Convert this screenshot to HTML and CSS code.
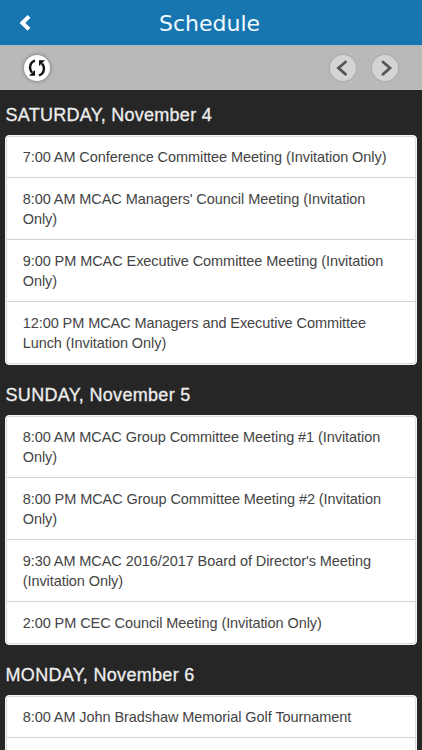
FILE: index.html
```html
<!DOCTYPE html>
<html lang="en">
<head>
    <meta charset="UTF-8">
    <meta name="viewport" content="width=device-width, initial-scale=1.0">
    <title>Schedule</title>
    <link rel="stylesheet" href="styles.css">
</head>
<body>
    <header class="header">
        <a class="back" href="#" aria-label="Back">
            <svg width="12" height="18" viewBox="0 0 12 18"><path d="M10 2.300 3.400 9l6.600 6.300" fill="none" stroke="#fff" stroke-width="4"/></svg>
        </a>
        <h1>Schedule</h1>
    </header>
    <div class="toolbar">
        <button class="round refresh" aria-label="Refresh">
            <svg width="20" height="20" viewBox="0 0 20 20">
                <path d="M8 2.500C2.500 4.500 1.700 10.500 5 14.500M12 17.500C17.500 15.500 18.300 9.500 15 5.500" fill="none" stroke="#111" stroke-width="2.300"/>
                <path d="M2 17.800h6V12zM18 2.200h-6V8z" fill="#111"/>
            </svg>
        </button>
        <div class="pager">
            <button class="round" aria-label="Previous">
                <svg width="26" height="26" viewBox="0 0 26 26"><path d="M15.500 7 8.500 13l7 6.300" fill="none" stroke="#555" stroke-width="2.800" stroke-linecap="round"/></svg>
            </button>
            <button class="round" aria-label="Next">
                <svg width="26" height="26" viewBox="0 0 26 26"><path d="M11 7l7 6-7 6.300" fill="none" stroke="#555" stroke-width="2.800" stroke-linecap="round"/></svg>
            </button>
        </div>
    </div>

    <main class="schedule">
        <h2>SATURDAY, November 4</h2>
        <ul class="events">
            <li>7:00 AM Conference Committee Meeting (Invitation Only)</li>
            <li>8:00 AM MCAC Managers' Council Meeting (Invitation Only)</li>
            <li>9:00 PM MCAC Executive Committee Meeting (Invitation Only)</li>
            <li>12:00 PM MCAC Managers and Executive Committee Lunch (Invitation Only)</li>
        </ul>
        <h2>SUNDAY, November 5</h2>
        <ul class="events">
            <li>8:00 AM MCAC Group Committee Meeting #1 (Invitation Only)</li>
            <li>8:00 PM MCAC Group Committee Meeting #2 (Invitation Only)</li>
            <li>9:30 AM MCAC 2016/2017 Board of Director's Meeting (Invitation Only)</li>
            <li>2:00 PM CEC Council Meeting (Invitation Only)</li>
        </ul>
        <h2>MONDAY, November 6</h2>
        <ul class="events">
            <li>8:00 AM John Bradshaw Memorial Golf Tournament</li>
            <li></li>
        </ul>
    </main>
</body>
</html>
```
FILE: styles.css
```css
* {
    box-sizing: border-box;
}
body {
    display: flex;
    flex-direction: column;
    margin: 0;
    height: 100vh;
    overflow: hidden;
    background-color: #262626;
    font-family: "Liberation Sans", Arial, sans-serif;
}
.header {
    display: grid;
    flex: none;
    grid-template-columns: 50px 1fr 54px;
    align-items: center;
    height: 45px;
    background-color: #1775b0;
}
.back {
    display: flex;
    padding: 0 0 0 19px;
}
.header h1 {
    margin: 0;
    padding: 2px 0 0 1px;
    color: #f0fbff;
    font-family: "DejaVu Sans", Verdana, sans-serif;
    font-size: 22px;
    font-weight: normal;
    text-align: center;
}
.toolbar {
    display: flex;
    flex: none;
    justify-content: space-between;
    align-items: center;
    height: 45px;
    padding: 0 24px 1px;
    background-color: #b9b9b9;
    border-top: 1px solid #a9b9c2;
}
.pager {
    display: flex;
    gap: 16px;
}
.round {
    display: flex;
    justify-content: center;
    align-items: center;
    width: 26px;
    height: 26px;
    padding: 0;
    border: none;
    border-radius: 50%;
    background-color: #d4d4d4;
    box-shadow: 0 0 3px rgba(0,0,0,0.15);
}
.refresh {
    background-color: #fff;
    box-shadow: 0 0 4px rgba(0,0,0,0.4);
}
.schedule {
    flex: 1;
    min-height: 0;
    padding: 0 5px;
    overflow: hidden;
}
.schedule h2 {
    height: 50px;
    margin: 0;
    padding: 10px 0 0 0.5px;
    color: #ededed;
    font-size: 18px;
    font-weight: normal;
    letter-spacing: 0.32px;
    line-height: 40px;
    -webkit-text-stroke: 0.3px #ededed;
}
.schedule h2:first-child {
    height: 45px;
    padding-top: 5px;
    letter-spacing: 0.27px;
}
.events {
    height: 230px;
    margin: 0;
    padding: 0 1px;
    list-style: none;
    background-color: #fff;
    border: 1px solid #f4f4f4;
    border-radius: 4px;
    box-shadow: inset 0 0 0 1px #dadada;
}
.events li {
    min-height: 42px;
    padding: 11px 14px 10px 15.7px;
    border-bottom: 1px solid #d2d2d2;
    color: #444;
    font-size: 14.5px;
    letter-spacing: -0.07px;
    line-height: 20px;
}
.events li:last-child {
    border-bottom: none;
}
```
